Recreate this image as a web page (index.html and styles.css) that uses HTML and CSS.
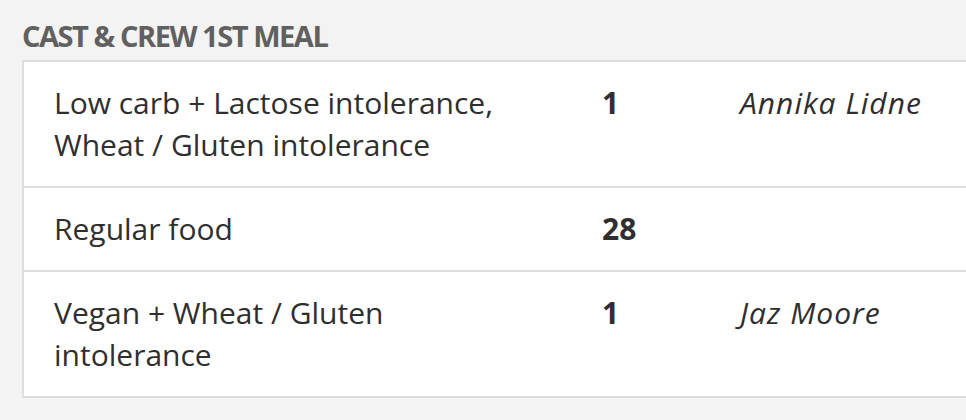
FILE: index.html
```html
<!DOCTYPE html>
<html lang="en">
<head>
<meta charset="utf-8">
<title>Cast &amp; Crew 1st Meal</title>
<link rel="stylesheet" href="styles.css">
</head>
<body>
<section class="meal">
  <h2 class="meal-title">CAST &amp; CREW 1ST MEAL</h2>
  <table class="meal-table">
    <colgroup>
      <col class="col-diet">
      <col class="col-count">
      <col class="col-names">
    </colgroup>
    <tbody>
      <tr>
        <td class="diet">Low carb + Lactose intolerance, Wheat / Gluten intolerance</td>
        <td class="count">1</td>
        <td class="names">Annika Lidne</td>
      </tr>
      <tr>
        <td class="diet">Regular food</td>
        <td class="count">28</td>
        <td class="names"></td>
      </tr>
      <tr>
        <td class="diet">Vegan + Wheat / Gluten intolerance</td>
        <td class="count">1</td>
        <td class="names">Jaz Moore</td>
      </tr>
    </tbody>
  </table>
</section>
</body>
</html>
```

FILE: styles.css
```css
html, body {
  margin: 0;
  padding: 0;
  background: #f3f3f3;
  overflow: hidden;
}

body {
  font-family: "Open Sans", "Liberation Sans", sans-serif;
  color: #2f2f2f;
}

.meal {
  padding: 15px 0 0 22px;
}

.meal-title {
  margin: 0 0 4px 0;
  font-size: 29px;
  line-height: 41px;
  font-weight: 700;
  letter-spacing: -1.45px;
  color: #606060;
}

.meal-table {
  width: 1000px;
  table-layout: fixed;
  border-collapse: collapse;
  background: #ffffff;
  border: 2px solid #dddddd;
}

.col-diet { width: 549px; }
.col-count { width: 138px; }

.meal-table tr {
  border-top: 2px solid #dddddd;
}

.meal-table td {
  padding: 20px 30px;
  font-size: 30px;
  line-height: 42px;
  vertical-align: top;
  text-align: left;
}

.count {
  font-weight: 700;
}

.names {
  font-style: italic;
  letter-spacing: 1px;
}
```
